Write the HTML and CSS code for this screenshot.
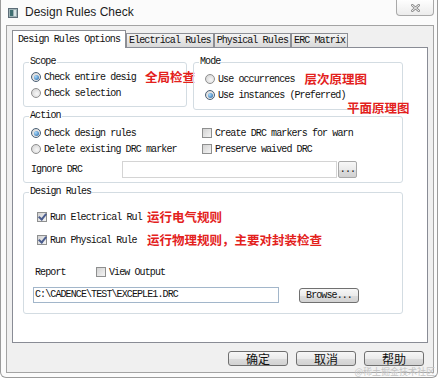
FILE: index.html
```html
<!doctype html>
<html lang="zh">

<head>
  <meta charset="UTF-8">
  <title>Design Rules Check</title>
  <link rel="stylesheet" href="styles.css">
</head>

<body>
  <div class="window">
    <div class="titlebar">
      <svg class="app-icon" width="10" height="10" viewBox="0 0 10 10">
        <rect x="0.5" y="0.5" width="9" height="9" fill="#9fb3b6" stroke="#5d6d78"/>
        <rect x="2" y="2" width="3" height="6" fill="#3f6f72"/>
        <rect x="6" y="2" width="2" height="6" fill="#d8e4e6"/>
      </svg>
      <span class="title">Design Rules Check</span>
      <div class="close">
        <svg width="9" height="8" viewBox="0 0 9 8">
          <path d="M1 1 L8 7 M8 1 L1 7" stroke="#8d8d8d" stroke-width="2.6" stroke-linecap="square"/>
          <path d="M1 1 L8 7 M8 1 L1 7" stroke="#f4f4f4" stroke-width="1" stroke-linecap="square"/>
        </svg>
      </div>
    </div>

    <div class="frame">
      <div class="tabs">
        <div class="tab active">Design Rules Options</div>
        <div class="tab">Electrical Rules</div>
        <div class="tab">Physical Rules</div>
        <div class="tab">ERC Matrix</div>
      </div>

      <div class="panel">
        <div class="group-row">
          <fieldset class="group scope">
            <legend>Scope</legend>
            <div class="scope-body">
              <div class="opt"><span class="radio on"></span><span class="scope-label">Check entire desig</span><span class="note scope-note">全局检查</span></div>
              <div class="opt"><span class="radio"></span><span>Check selection</span></div>
            </div>
          </fieldset>

          <fieldset class="group mode">
            <legend>Mode</legend>
            <div class="mode-body">
              <div class="opt"><span class="radio"></span><span>Use occurrences</span><span class="note mode-note">层次原理图</span></div>
              <div class="opt"><span class="radio on"></span><span>Use instances (Preferred)</span></div>
            </div>
            <span class="note flat-note">平面原理图</span>
          </fieldset>
        </div>

        <fieldset class="group action">
          <legend>Action</legend>
          <div class="action-body">
            <div class="opt"><span class="radio on"></span><span>Check design rules</span></div>
            <div class="opt"><span class="chk"></span><span>Create DRC markers for warn</span></div>
            <div class="opt"><span class="radio"></span><span>Delete existing DRC marker</span></div>
            <div class="opt"><span class="chk"></span><span>Preserve waived DRC</span></div>
            <div class="ignore-row">
              <span class="ignore-label">Ignore DRC</span>
              <span class="field"></span>
              <span class="btn dots">...</span>
            </div>
          </div>
        </fieldset>

        <fieldset class="group rules">
          <legend>Design Rules</legend>
          <div class="rules-body">
            <div class="opt check-row"><span class="chk on"></span><span class="rule-label">Run Electrical Rul</span><span class="note rule-note">运行电气规则</span></div>
            <div class="opt check-row second"><span class="chk on"></span><span class="rule-label">Run Physical Rule</span><span class="note rule-note">运行物理规则，主要对封装检查</span></div>
            <div class="opt report-row">
              <span class="report-label">Report</span>
              <span class="chk"></span><span>View Output</span>
            </div>
            <div class="path-row">
              <span class="path">C:\CADENCE\TEST\EXCEPLE1.DRC</span>
              <span class="btn browse">Browse...</span>
            </div>
          </div>
        </fieldset>
      </div>

      <div class="actions">
        <span class="btn cjk">确定</span>
        <span class="btn cjk">取消</span>
        <span class="btn cjk">帮助</span>
      </div>
    </div>

    <span class="mark">@稀土掘金技术社区</span>
  </div>
</body>

</html>
```

FILE: styles.css
```css
* {
  box-sizing: border-box;
}

body {
  margin: 0;
  background: #fff;
  font-family: "Liberation Mono", "Noto Sans CJK SC", monospace;
  font-size: 10px;
  letter-spacing: -0.9px;
  color: #111;
}

.window {
  position: relative;
  width: 438px;
  height: 378px;
  border: 1px solid #9b9b9b;
  border-top: none;
  border-radius: 0 0 6px 6px;
  background: #fbfbfb;
  padding: 0 3px 4px 5px;
  display: flex;
  flex-direction: column;
}

.titlebar {
  height: 25px;
  flex-shrink: 0;
  display: flex;
  align-items: flex-start;
}

.app-icon {
  margin: 8px 0 0 2px;
}

.title {
  margin: 5px 0 0 7px;
  font-family: "Liberation Sans", sans-serif;
  font-size: 12px;
  line-height: 14px;
  letter-spacing: 0;
  color: #1d1d1d;
}

.close {
  margin-left: auto;
  width: 38px;
  height: 16px;
  border: 1px solid #a9a9a9;
  border-top: none;
  border-radius: 0 0 4px 4px;
  background: linear-gradient(#fefefe, #ececec);
  display: flex;
  align-items: center;
  justify-content: center;
}

.frame {
  height: 348px;
  flex-shrink: 0;
  border: 1px solid #a3a3a3;
  background: #f0f0f0;
  padding: 4px 5px 0;
  display: flex;
  flex-direction: column;
}

/* tabs */
.tabs {
  display: flex;
  align-items: flex-end;
  height: 17px;
  flex-shrink: 0;
}

.tab {
  height: 14px;
  padding: 0 2px;
  border: 1px solid #8c8e94;
  border-bottom: none;
  background: linear-gradient(#f4f4f4, #d9d9d9);
  line-height: 14px;
  white-space: nowrap;
}

.tab.active {
  position: relative;
  z-index: 1;
  height: 18px;
  margin-bottom: -1px;
  padding: 1px 5px 0;
  background: #fff;
  line-height: 16px;
}

.panel {
  height: 296px;
  flex-shrink: 0;
  border: 1px solid #898c95;
  background: #fff;
  padding: 8px 0 0 10px;
}

/* group boxes */
.group-row {
  display: flex;
  align-items: flex-start;
  gap: 6px;
  height: 54px;
}

.group {
  position: relative;
  margin: 0;
  padding: 0;
  min-width: 0;
  border: 1px solid #d3dce2;
  border-radius: 3px;
}

.group legend {
  margin-left: 5px;
  padding: 0 1px;
  line-height: 12px;
}

.scope {
  width: 164px;
  height: 51px;
}

.mode {
  width: 210px;
  height: 54px;
}

.action {
  width: 380px;
  height: 73px;
}

.rules {
  width: 380px;
  height: 128px;
  margin-top: 3px;
}

.scope-body {
  padding: 1px 0 0 7px;
}

.mode-body {
  padding: 3px 0 0 11px;
}

.action-body {
  display: grid;
  grid-template-columns: 171px 1fr;
  grid-template-rows: 16px 15px auto;
  padding: 3px 0 0 7px;
}

.rules-body {
  padding: 11px 0 0 9px;
}

.opt {
  display: flex;
  align-items: center;
  height: 16px;
  white-space: nowrap;
}

.scope-label {
  width: 94px;
  flex-shrink: 0;
}

.rule-label {
  width: 92px;
  flex-shrink: 0;
}

/* radios and checkboxes */
.radio {
  width: 10px;
  height: 10px;
  flex-shrink: 0;
  margin-right: 3px;
  border: 1px solid #8f8f8f;
  border-radius: 50%;
  background: radial-gradient(circle at 60% 60%, #f7f7f7, #cfcfcf);
  display: flex;
  align-items: center;
  justify-content: center;
}

.radio.on {
  border-color: #4a5f75;
}

.radio.on::after {
  content: "";
  width: 5px;
  height: 5px;
  border-radius: 50%;
  background: radial-gradient(circle at 35% 35%, #a9dcff, #1f5f9f);
}

.chk {
  width: 10px;
  height: 10px;
  flex-shrink: 0;
  margin-right: 3px;
  border: 1px solid #8e8f8f;
  background: linear-gradient(135deg, #d2d2d2, #f4f4f4);
  display: flex;
  align-items: center;
  justify-content: center;
}

.chk.on::after {
  content: "";
  width: 3px;
  height: 6px;
  margin-top: -2px;
  border-right: 2px solid #4b5d8e;
  border-bottom: 2px solid #4b5d8e;
  transform: rotate(40deg);
}

/* annotations */
.note {
  color: #e3211c;
  font-family: "Noto Sans CJK SC", sans-serif;
  font-weight: 700;
  font-size: 12.5px;
  line-height: 14px;
  letter-spacing: 0;
  white-space: nowrap;
}

.scope-note {
  margin-left: 7px;
}

.mode-note {
  margin-left: 10px;
}

.flat-note {
  position: absolute;
  left: 153px;
  top: 33px;
}

.rule-note {
  margin-left: 5px;
}

/* action row */
.ignore-row {
  grid-column: 1 / -1;
  display: flex;
  align-items: center;
  height: 17px;
  margin-top: 5px;
}

.ignore-label {
  width: 91px;
}

.field {
  width: 215px;
  height: 17px;
  border: 1px solid #d4d4d4;
  background: #fff;
}

.btn {
  height: 15px;
  border: 1px solid #707070;
  border-radius: 3px;
  background: linear-gradient(#f7f7f7 0%, #ebebeb 50%, #dcdcdc 51%, #d2d2d2 100%);
  display: flex;
  align-items: center;
  justify-content: center;
  white-space: nowrap;
}

.dots {
  width: 19px;
  height: 17px;
  margin-left: 1px;
  border-color: #a8a8a8;
  border-radius: 2px;
}

/* design rules */
.check-row {
  margin-left: 4px;
}

.check-row.second {
  margin-top: 7px;
}

.report-row {
  margin-top: 16px;
}

.report-label {
  width: 61px;
  margin-left: 2px;
}

.path-row {
  display: flex;
  align-items: flex-start;
  margin-top: 7px;
}

.path {
  width: 246px;
  height: 16px;
  padding-left: 1px;
  border: 1px solid #a2b6ca;
  background: #fff;
  line-height: 14px;
}

.browse {
  width: 60px;
  margin: 1px 0 0 20px;
}

/* bottom buttons */
.actions {
  display: flex;
  justify-content: flex-end;
  gap: 8px;
  margin-top: 8px;
  padding-right: 4px;
}

.btn.cjk {
  width: 60px;
  font-family: "Noto Sans CJK SC", sans-serif;
  font-size: 12px;
  letter-spacing: 0;
  line-height: 1;
  color: #111;
}

.mark {
  position: absolute;
  right: 2px;
  bottom: 0;
  font-family: "Noto Sans CJK SC", sans-serif;
  font-size: 9px;
  line-height: 10px;
  letter-spacing: 0;
  color: #c4c4c4;
}
```
